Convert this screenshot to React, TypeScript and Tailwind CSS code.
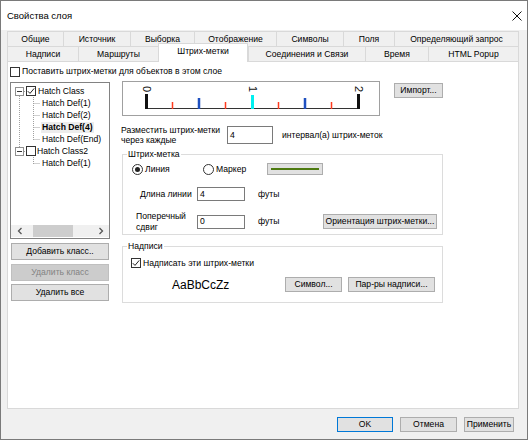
import React from "react";

function Btn({ className = "", children, disabled, primary }: any) {
  const tone = disabled
    ? "bg-[#cccccc] border-[#bfbfbf] text-[#838383]"
    : primary
    ? "bg-[#e1e1e1] border-[#0078d7] text-black"
    : "bg-[#e1e1e1] border-[#adadad] text-black";
  return (
    <div className={`flex items-center justify-center shrink-0 border whitespace-nowrap ${tone} ${className}`}>
      {children}
    </div>
  );
}

function Check({ checked }: { checked?: boolean }) {
  return (
    <span className="w-[10px] h-[10px] border border-[#333] bg-white shrink-0 flex items-center justify-center">
      {checked && (
        <svg width="8" height="8" viewBox="0 0 8 8">
          <path d="M0.8 4.2 L3 6.4 L7.2 1.4" fill="none" stroke="#222" strokeWidth="1" />
        </svg>
      )}
    </span>
  );
}

function Radio({ on }: { on?: boolean }) {
  return (
    <span className="w-[11px] h-[11px] rounded-full border border-[#333] bg-white shrink-0 flex items-center justify-center">
      {on && <span className="w-[5px] h-[5px] rounded-full bg-[#222]" />}
    </span>
  );
}

function Field({ value, className = "" }: any) {
  return (
    <div className={`border border-[#7a7a7a] bg-white flex items-center pl-[2px] shrink-0 ${className}`}>{value}</div>
  );
}

function Expander() {
  return (
    <span className="w-[9px] h-[9px] border border-[#919191] bg-white shrink-0 flex items-center justify-center">
      <span className="w-[5px] h-[1px] bg-[#333]" />
    </span>
  );
}

// tick marks along the hatch preview line
const ticks = [
  { x: 49.5, c: "#ff3b1f", w: 1.5, y: 20 },
  { x: 76, c: "#1f50c0", w: 2.5, y: 16 },
  { x: 102.5, c: "#ff3b1f", w: 1.5, y: 20 },
  { x: 129.5, c: "#00f0f0", w: 3, y: 13 },
  { x: 155.5, c: "#ff3b1f", w: 1.5, y: 20 },
  { x: 182, c: "#1f50c0", w: 2.5, y: 16 },
  { x: 208.5, c: "#ff3b1f", w: 1.5, y: 20 },
];

function HatchPreview() {
  return (
    <div className="w-[258px] h-[35px] border border-[#a0a0a0] bg-white shrink-0">
      <svg width="256" height="33" viewBox="0 0 256 33">
        <line x1="23" y1="26.5" x2="236" y2="26.5" stroke="#333" strokeWidth="1" />
        <rect x="22" y="12" width="3" height="15" fill="#111" />
        <rect x="234" y="12" width="3" height="15" fill="#111" />
        {ticks.map((t, i) => (
          <rect key={i} x={t.x - t.w / 2} y={t.y} width={t.w} height={27 - t.y} fill={t.c} />
        ))}
        {[
          { x: 23.5, l: "0" },
          { x: 129.5, l: "1" },
          { x: 235.5, l: "2" },
        ].map((m) => (
          <text
            key={m.l}
            x="0"
            y="0"
            transform={`translate(${m.x},7) rotate(90)`}
            textAnchor="middle"
            dominantBaseline="central"
            fontSize="11"
            fontFamily="Liberation Sans, Arial, sans-serif"
            fill="#111"
          >
            {m.l}
          </text>
        ))}
      </svg>
    </div>
  );
}

function Tree() {
  return (
    <div className="relative w-[100px] h-[157px] mt-[1px] border border-[#828282] bg-white flex flex-col">
      <svg className="absolute left-0 top-0" width="98" height="110" viewBox="0 0 98 110">
        <g stroke="#a0a0a0" strokeWidth="1" strokeDasharray="1 1" fill="none">
          <line x1="8.5" y1="13" x2="8.5" y2="64" />
          <line x1="22.5" y1="14" x2="22.5" y2="57" />
          <line x1="22.5" y1="20.5" x2="29" y2="20.5" />
          <line x1="22.5" y1="32.5" x2="29" y2="32.5" />
          <line x1="22.5" y1="44.5" x2="29" y2="44.5" />
          <line x1="22.5" y1="56.5" x2="29" y2="56.5" />
          <line x1="22.5" y1="74" x2="22.5" y2="81" />
          <line x1="22.5" y1="80.5" x2="29" y2="80.5" />
          <line x1="13" y1="8.5" x2="15" y2="8.5" />
          <line x1="13" y1="68.5" x2="15" y2="68.5" />
        </g>
      </svg>
      <div className="relative pt-[2px] flex flex-col">
        <div className="h-[12px] flex items-center pl-[4px]">
          <Expander />
          <span className="ml-[2px]"><Check checked /></span>
          <span className="ml-[2px]">Hatch Class</span>
        </div>
        <div className="h-[12px] flex items-center pl-[31px]">Hatch Def(1)</div>
        <div className="h-[12px] flex items-center pl-[31px]">Hatch Def(2)</div>
        <div className="h-[12px] flex items-center pl-[30px]">
          <span className="font-bold bg-[#ececec] px-[1px] leading-[11px]">Hatch Def(4)</span>
        </div>
        <div className="h-[12px] flex items-center pl-[31px]">Hatch Def(End)</div>
        <div className="h-[12px] flex items-center pl-[4px]">
          <Expander />
          <span className="ml-[2px]"><Check /></span>
          <span className="ml-[1px]">Hatch Class2</span>
        </div>
        <div className="h-[12px] flex items-center pl-[31px]">Hatch Def(1)</div>
      </div>
      <div className="mt-auto mb-[1px] h-[12px] bg-[#f0f0f0] flex items-center">
        <div className="w-[17px] h-full flex items-center justify-center">
          <svg width="6" height="8" viewBox="0 0 6 8"><path d="M4.5 1 L1.5 4 L4.5 7" fill="none" stroke="#555" strokeWidth="1.3" /></svg>
        </div>
        <div className="flex-1 h-full pl-[5px]">
          <div className="w-[40px] h-full bg-[#cdcdcd]" />
        </div>
        <div className="w-[17px] h-full flex items-center justify-center">
          <svg width="6" height="8" viewBox="0 0 6 8"><path d="M1.5 1 L4.5 4 L1.5 7" fill="none" stroke="#555" strokeWidth="1.3" /></svg>
        </div>
      </div>
    </div>
  );
}

const row1 = [
  { t: "Общие", w: "w-[56px]" },
  { t: "Источник", w: "w-[67px]" },
  { t: "Выборка", w: "w-[64px]" },
  { t: "Отображение", w: "w-[82px]" },
  { t: "Символы", w: "w-[67px]" },
  { t: "Поля", w: "w-[51px]" },
  { t: "Определяющий запрос", w: "w-[125px]" },
];

const row2 = [
  { t: "Надписи", w: "w-[71px]" },
  { t: "Маршруты", w: "w-[80px]" },
  { t: "Штрих-метки", w: "w-[90px]", sel: true },
  { t: "Соединения и Связи", w: "w-[117px]" },
  { t: "Время", w: "w-[63px]" },
  { t: "HTML Popup", w: "w-[91px]" },
];

export default function App() {
  return (
    <div className="w-[528px] h-[440px] bg-[#f0f0f0] border border-[#7a7a7a] flex flex-col font-['Liberation_Sans',Arial,sans-serif] text-[8.6px] text-black leading-none overflow-hidden">
      {/* title bar */}
      <div className="h-[29px] bg-white flex items-center justify-between pl-[6px] pr-[5px] shrink-0">
        <span className="text-[9.5px]">Свойства слоя</span>
        <svg width="10" height="10" viewBox="0 0 10 10">
          <path d="M0.5 0.5 L9.5 9.5 M9.5 0.5 L0.5 9.5" stroke="#111" strokeWidth="1" />
        </svg>
      </div>

      {/* tabs */}
      <div className="ml-[6px] w-[512px] mt-[1px] flex flex-col">
        <div className="flex h-[15px]">
          {row1.map((t, i) => (
            <div
              key={t.t}
              className={`${t.w} h-full flex items-center justify-center border-t border-l border-[#d9d9d9] ${i === row1.length - 1 ? "border-r" : ""}`}
            >
              {t.t}
            </div>
          ))}
        </div>
        <div className="flex h-[15px] items-end">
          {row2.map((t, i) =>
            t.sel ? (
              <div
                key={t.t}
                className={`${t.w} h-[19px] -mb-[1px] relative z-10 bg-white flex items-center justify-center border-t border-l border-r border-[#d9d9d9] pb-[3px]`}
              >
                {t.t}
              </div>
            ) : (
              <div
                key={t.t}
                className={`${t.w} h-full flex items-center justify-center border-t border-l border-[#d9d9d9] ${i === row2.length - 1 ? "border-r" : ""}`}
              >
                {t.t}
              </div>
            )
          )}
        </div>

        {/* panel */}
        <div className="h-[348px] bg-white border border-[#d9d9d9] pl-[2px] pt-[4px] flex flex-col">
          <div className="h-[11px] flex items-center">
            <Check />
            <span className="ml-[2px]">Поставить штрих-метки для объектов в этом слое</span>
          </div>

          <div className="flex mt-[4px]">
            {/* left column */}
            <div className="flex flex-col w-[100px]">
              <Tree />
              <Btn className="ml-[1px] w-[98px] h-[17px] mt-[4px]">Добавить класс..</Btn>
              <Btn className="ml-[1px] w-[98px] h-[17px] mt-[4px]" disabled>Удалить класс</Btn>
              <Btn className="ml-[1px] w-[98px] h-[17px] mt-[3px]">Удалить все</Btn>
            </div>

            {/* right column */}
            <div className="ml-[12px] flex flex-col w-[322px]">
              <div className="flex items-start">
                <HatchPreview />
                <Btn className="ml-[14px] mt-[2px] w-[49px] h-[15px]">Импорт...</Btn>
              </div>

              <div className="flex items-center mt-[10px] h-[18px]">
                <div className="-ml-[1px] w-[106px] leading-[10px]">
                  Разместить штрих-метки
                  <br />
                  через каждые
                </div>
                <Field value="4" className="w-[46px] h-[18px]" />
                <span className="ml-[9px]">интервал(а) штрих-меток</span>
              </div>

              {/* group: hatch */}
              <div className="mt-[10px] w-[321px] h-[81px] border border-[#dcdcdc] flex flex-col">
                <span className="-mt-[6px] ml-[4px] px-[1px] bg-white leading-[11px] w-fit">Штрих-метка</span>
                <div className="mt-[3px] h-[12px] flex items-center pl-[9px]">
                  <div className="w-[71px] flex items-center">
                    <Radio on />
                    <span className="ml-[2px]">Линия</span>
                  </div>
                  <div className="w-[64px] flex items-center">
                    <Radio />
                    <span className="ml-[2px]">Маркер</span>
                  </div>
                  <div className="w-[56px] h-[12px] bg-[#e1e1e1] border border-[#adadad] flex items-center justify-center">
                    <div className="w-[48px] h-[1.5px] bg-[#4d7a10]" />
                  </div>
                </div>
                <div className="mt-[12px] h-[14px] flex items-center pl-[17px]">
                  <span className="w-[57px]">Длина линии</span>
                  <Field value="4" className="w-[48px] h-[14px]" />
                  <span className="ml-[13px]">футы</span>
                </div>
                <div className="mt-[13px] h-[15px] flex items-center pl-[13px] pr-[5px]">
                  <span className="w-[61px] leading-[11px]">
                    Поперечный
                    <br />
                    сдвиг
                  </span>
                  <Field value="0" className="w-[48px] h-[14px]" />
                  <span className="ml-[13px]">футы</span>
                  <Btn className="ml-auto w-[114px] h-[15px]">Ориентация штрих-метки...</Btn>
                </div>
              </div>

              {/* group: labels */}
              <div className="mt-[11px] w-[321px] h-[57px] border border-[#dcdcdc] flex flex-col">
                <span className="-mt-[6px] ml-[4px] px-[1px] bg-white leading-[11px] w-fit">Надписи</span>
                <div className="mt-[6px] h-[10px] flex items-center pl-[8px]">
                  <Check checked />
                  <span className="ml-[2px]">Надписать эти штрих-метки</span>
                </div>
                <div className="mt-[9px] h-[15px] flex items-center pl-[49px] pr-[7px]">
                  <span className="text-[12px]">AaBbCcZz</span>
                  <Btn className="ml-auto w-[57px] h-[15px]">Символ...</Btn>
                  <Btn className="ml-[6px] w-[87px] h-[15px]">Пар-ры надписи...</Btn>
                </div>
              </div>
            </div>
          </div>
        </div>
      </div>

      {/* dialog buttons */}
      <div className="mt-[8px] flex justify-end pr-[13px]">
        <Btn className="w-[56px] h-[15px]" primary>OK</Btn>
        <Btn className="ml-[7px] w-[57px] h-[15px]">Отмена</Btn>
        <Btn className="ml-[7px] w-[50px] h-[15px]">Применить</Btn>
      </div>
    </div>
  );
}
